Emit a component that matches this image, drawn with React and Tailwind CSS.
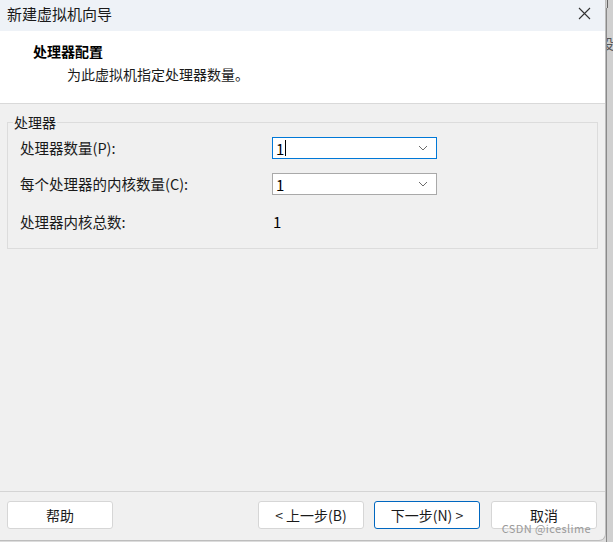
import React from "react";

const font = { fontFamily: '"Noto Sans CJK SC", "Noto Sans", sans-serif' };

function Chevron() {
  return (
    <svg width="10" height="6" viewBox="0 0 10 6" className="block">
      <path d="M1 1 L5 5 L9 1" fill="none" stroke="#6b6b6b" strokeWidth="1" />
    </svg>
  );
}

function Combo({ focused, caret }) {
  return (
    <div
      className={`flex items-center justify-between w-[165px] h-[22px] bg-white border ${
        focused ? "border-[#0078d7]" : "border-[#a9a9a9]"
      } pl-[3px] pr-[8px]`}
    >
      <div className="flex items-center text-[15px] leading-none text-black">
        <span>1</span>
        {caret && <span className="inline-block w-px h-[16px] bg-black ml-[1px]" />}
      </div>
      <Chevron />
    </div>
  );
}

function Btn({ children, primary }) {
  return (
    <button
      className={`w-[106px] h-[28px] bg-white rounded-[3px] border ${
        primary ? "border-[#0067c0]" : "border-[#d6d6d6]"
      } text-[14px] text-[#1a1a1a] flex items-center justify-center leading-none`}
    >
      {children}
    </button>
  );
}

export default function App() {
  return (
    <div className="w-[613px] h-[542px] flex bg-[#dcdcdc] overflow-hidden" style={font}>
      <div className="w-[606px] h-[541px] flex flex-col bg-[#f0f0f0] rounded-br-[7px] border-r border-b border-[#bdbdbd] overflow-hidden relative">
        {/* title bar */}
        <div className="h-[31px] bg-[#eef2f7] flex items-center justify-between pl-[7px] pr-[14px]">
          <span className="text-[15px] text-[#1a1a1a] leading-none -mt-[4px]">新建虚拟机向导</span>
          <svg width="13" height="13" viewBox="0 0 13 13" className="-mt-[4px]">
            <path d="M1 1 L12 12 M12 1 L1 12" stroke="#333" strokeWidth="1.1" />
          </svg>
        </div>
        {/* header */}
        <div className="h-[73px] bg-white border-b border-[#d9d9d9] pl-[33px] pt-[10px]">
          <div className="text-[14px] font-bold text-black leading-[20px]">处理器配置</div>
          <div className="text-[14px] text-[#1a1a1a] leading-[20px] pl-[34px] mt-[3px]">为此虚拟机指定处理器数量。</div>
        </div>
        {/* body */}
        <div className="flex-1 px-[7px] pt-[8px]">
          <fieldset className="border border-[#dcdcdc] h-[137px] pl-[12px] pr-[12px]">
            <legend className="text-[14px] text-[#1a1a1a] leading-[20px] -ml-[7px] px-[1px]">处理器</legend>
            <div className="grid grid-cols-[252px_1fr] gap-y-[14px] items-center mt-[5px]">
              <span className="text-[14.5px] text-[#1a1a1a]">处理器数量(P):</span>
              <Combo focused caret />
              <span className="text-[14.5px] text-[#1a1a1a]">每个处理器的内核数量(C):</span>
              <Combo />
              <span className="text-[14.5px] text-[#1a1a1a] mt-[2px]">处理器内核总数:</span>
              <span className="text-[15px] text-black pl-[1px] mt-[2px]">1</span>
            </div>
          </fieldset>
        </div>
        {/* footer */}
        <div className="h-[49px] border-t border-[#d4d4d4] flex items-start pt-[9px] pl-[7px] pr-[8px]">
          <Btn>帮助</Btn>
          <div className="flex-1" />
          <div className="flex">
            <Btn>&lt; 上一步(B)</Btn>
            <div className="w-[10px]" />
            <Btn primary>下一步(N) &gt;</Btn>
            <div className="w-[11px]" />
            <Btn>取消</Btn>
          </div>
        </div>
        <span className="absolute right-[14px] bottom-[6px] text-[11px] leading-none text-[#9a9a9a] tracking-[0.4px]">
          CSDN @iceslime
        </span>
      </div>
      <div className="w-[7px] h-full flex flex-col bg-[#d0d0d0]">
        <div className="h-[8px] w-px bg-[#666] ml-px" />
        <div className="flex-1 border-l border-[#8a8a8a] overflow-hidden">
          <span className="block text-[14px] leading-none text-[#555] -ml-[7px] mt-[28px]">设</span>
        </div>
      </div>
    </div>
  );
}
